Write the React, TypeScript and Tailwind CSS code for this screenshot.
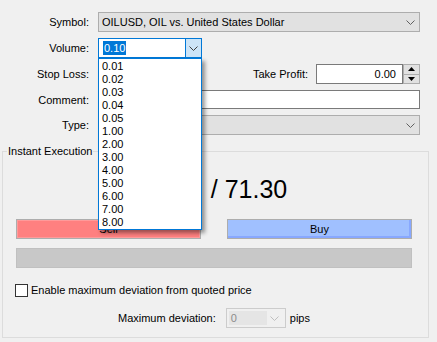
const VOLUMES = ["0.01", "0.02", "0.03", "0.04", "0.05", "1.00", "2.00", "3.00", "4.00", "5.00", "6.00", "7.00", "8.00"];

function Chevron({ color = "#606060" }: { color?: string }) {
  return (
    <svg width="9" height="5" viewBox="0 0 9 5" fill="none" stroke={color} strokeWidth="1">
      <path d="M0.5 0.5 L4.5 4.5 L8.5 0.5" />
    </svg>
  );
}

function Combo({ value, className = "" }: { value: string; className?: string }) {
  return (
    <div className={`h-[20px] flex items-center border border-[#adadad] bg-[#e1e1e1] pl-[3px] pr-[4px] ${className}`}>
      <span className="flex-1 truncate">{value}</span>
      <Chevron />
    </div>
  );
}

function Spinner() {
  return (
    <div className="w-[17px] h-[20px] flex flex-col border border-[#adadad] bg-[#e1e1e1]">
      <div className="flex-1 flex items-center justify-center border-b border-[#adadad]">
        <svg width="7" height="4" viewBox="0 0 7 4"><path d="M0 4 L3.5 0 L7 4 Z" fill="#000" /></svg>
      </div>
      <div className="flex-1 flex items-center justify-center">
        <svg width="7" height="4" viewBox="0 0 7 4"><path d="M0 0 L3.5 4 L7 0 Z" fill="#000" /></svg>
      </div>
    </div>
  );
}

function Label({ children }: { children: React.ReactNode }) {
  return <div className="w-[89px] text-right shrink-0">{children}</div>;
}

export default function App() {
  return (
    <div
      className="w-[437px] h-[342px] bg-[#f0f0f0] text-black text-[11px] leading-[14px] overflow-hidden"
      style={{ fontFamily: '"Liberation Sans", Arial, sans-serif' }}
    >
      <div className="pt-[12px] pr-[17px] flex flex-col gap-[6px]">
        <div className="flex items-center gap-[9px]">
          <Label>Symbol:</Label>
          <Combo value="OILUSD, OIL vs. United States Dollar" className="flex-1" />
        </div>

        <div className="flex items-center gap-[9px] relative z-20">
          <Label>Volume:</Label>
          <div className="relative w-[104px] h-[20px] flex border border-[#0078d7] bg-white">
            <div className="flex-1 flex items-center pl-[4px]">
              <span className="bg-[#0078d7] text-white px-[1px]">0.10</span>
            </div>
            <div className="w-[16px] flex items-center justify-center bg-[#cce4f7] border-l border-[#0078d7]">
              <Chevron color="#404040" />
            </div>
            {/* open list */}
            <div className="absolute left-[-1px] top-[19px] w-[104px] bg-white border border-[#0078d7] pt-[1px] shadow-[3px_3px_4px_rgba(0,0,0,0.4)]">
              {VOLUMES.map((v) => (
                <div key={v} className="h-[13px] leading-[13px] pl-[3px]">{v}</div>
              ))}
            </div>
          </div>
        </div>

        <div className="flex items-center gap-[9px]">
          <Label>Stop Loss:</Label>
          <div className="flex items-center">
            <div className="w-[87px] h-[20px] border border-[#7a7a7a] bg-white text-right pr-[4px] leading-[18px]">0.00</div>
            <Spinner />
          </div>
          <div className="flex-1" />
          <div className="flex items-center gap-[8px]">
            <span>Take Profit:</span>
            <div className="flex items-center">
              <div className="w-[87px] h-[20px] border border-[#7a7a7a] bg-white text-right pr-[6px] leading-[18px]">0.00</div>
              <Spinner />
            </div>
          </div>
        </div>

        <div className="flex items-center gap-[9px]">
          <Label>Comment:</Label>
          <div className="flex-1 h-[19px] border border-[#7a7a7a] bg-white" />
        </div>

        <div className="flex items-center gap-[9px]">
          <Label>Type:</Label>
          <Combo value="Instant Execution" className="flex-1" />
        </div>
      </div>

      <fieldset className="mt-[9px] ml-[2px] w-[426px] border border-[#dcdcdc] pl-[13px] pr-[16px] pt-[16px] pb-[9px]">
        <legend className="ml-[-9px] px-[1px] leading-[14px]">Instant Execution</legend>

        <div className="text-center text-[25px] leading-[30px] pr-[5px]">71.21{"\u2002"}/ 71.30</div>

        <div className="mt-[15px] grid grid-cols-[185px_185px] gap-[26px]">
          <div className="h-[20px] border border-[#adadad] bg-[#ff8080] shadow-[inset_0_0_0_1px_#ff9a9a] flex items-center justify-center">Sell</div>
          <div className="h-[20px] border border-[#adadad] bg-[#a0c0ff] shadow-[inset_-1px_-1px_0_1px_#88a8ff] flex items-center justify-center">Buy</div>
        </div>

        <div className="mt-[9px] h-[20px] border border-[#c0c0c0] bg-[#c8c8c8]" />

        <label className="mt-[15px] -ml-px flex items-center gap-[3px]">
          <span className="w-[13px] h-[13px] border border-[#333] bg-white" />
          <span>Enable maximum deviation from quoted price</span>
        </label>

        <div className="mt-[11px] flex items-center justify-center gap-[10px]">
          <span>Maximum deviation:</span>
          <div className="flex items-center gap-[4px]">
            <div className="w-[60px] h-[20px] border border-[#cccccc] bg-[#f0f0f0] flex items-center p-[2px]">
              <div className="w-[38px] h-full bg-[#e5e5e5] text-[#8c8c8c] pl-[2px] leading-[14px]">0</div>
              <div className="flex-1 flex justify-center"><Chevron color="#bfbfbf" /></div>
            </div>
            <span>pips</span>
          </div>
        </div>
      </fieldset>
    </div>
  );
}
